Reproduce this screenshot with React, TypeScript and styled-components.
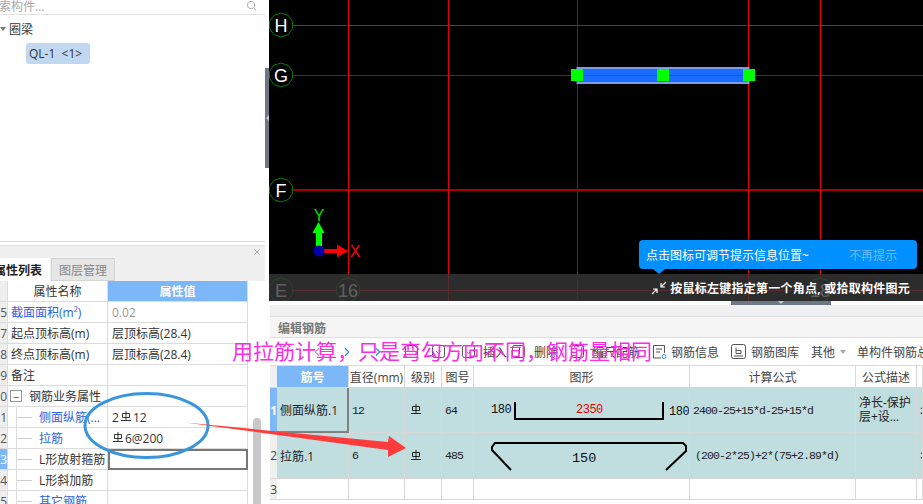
import React from 'react';
import styled, { createGlobalStyle } from 'styled-components';
import { Search, ChevronLeft, ChevronRight, X as CloseIcon } from 'lucide-react';

const GlobalStyle = createGlobalStyle`
  html, body {
    margin: 0;
    padding: 0;
    background: #fff;
    font-family: "Open Sans", "Noto Sans CJK SC", sans-serif;
  }
  * { box-sizing: border-box; }
`;

const Page = styled.div`
  position: relative;
  display: flex;
  width: 923px;
  height: 504px;
  overflow: hidden;
  background: #fff;
  color: #333;
  font-size: 12px;
`;

/* ---------- left column ---------- */

const LeftColumn = styled.div`
  display: flex;
  flex-direction: column;
  width: 265px;
  flex-shrink: 0;
`;

const TreePanel = styled.div`
  height: 242px;
  border-bottom: 1px solid #ddd;
  flex-shrink: 0;
`;

const SearchBar = styled.div`
  display: flex;
  align-items: center;
  justify-content: space-between;
  height: 15px;
  padding-right: 8px;
  border-bottom: 1px solid #e2e2e2;
  overflow: hidden;
  color: #a8a8a8;
  svg { color: #aaa; margin-top: -3px; }
`;

const SearchText = styled.span`
  margin-left: -13px;
  margin-top: -2px;
  line-height: 15px;
`;

const TreeRow = styled.div`
  display: flex;
  align-items: center;
  gap: 3px;
  height: 28px;
`;

const Caret = styled.span`
  width: 0;
  height: 0;
  border-left: 3px solid transparent;
  border-right: 3px solid transparent;
  border-top: 4px solid #777;
`;

const TreeChip = styled.div`
  width: 64px;
  height: 21px;
  margin-left: 26px;
  padding-left: 3px;
  background: #c0d8f1;
  border-radius: 3px;
  line-height: 21px;
  white-space: pre;
`;

const PropPanel = styled.div`
  display: flex;
  flex-direction: column;
  flex: 1;
  min-height: 0;
  margin-top: 3px;
  background: #f0f0f0;
  border-top: 1px solid #ddd;
`;

const PanelHeader = styled.div`
  display: flex;
  justify-content: flex-end;
  align-items: center;
  height: 12px;
  padding-right: 3px;
  svg { color: #999; }
`;

const Tabs = styled.div`
  display: flex;
  height: 23px;
  gap: 1px;
`;

const Tab = styled.div<{ $active?: boolean }>`
  display: flex;
  align-items: center;
  justify-content: ${p => (p.$active ? 'flex-end' : 'center')};
  width: ${p => (p.$active ? '50px' : '64px')};
  padding-right: ${p => (p.$active ? '8px' : '0')};
  background: ${p => (p.$active ? '#fff' : '#e6e6e6')};
  color: ${p => (p.$active ? '#222' : '#888')};
  border: ${p => (p.$active ? 'none' : '1px solid #d4d4d4')};
  font-weight: ${p => (p.$active ? 700 : 400)};
  white-space: nowrap;
  overflow: hidden;
`;

const PropBody = styled.div`
  display: flex;
  flex: 1;
  min-height: 0;
  background: #fff;
  overflow: hidden;
`;

const PropTable = styled.div`
  width: 248px;
  flex-shrink: 0;
`;

const PropRow = styled.div`
  display: grid;
  grid-template-columns: 8px 100px 140px;
  height: 21px;
`;

const RowNo = styled.div<{ $active?: boolean }>`
  display: flex;
  justify-content: flex-end;
  align-items: center;
  overflow: hidden;
  background: ${p => (p.$active ? '#7db7f7' : '#eee')};
  color: ${p => (p.$active ? '#fff' : '#555')};
  border-bottom: 1px solid #dcdcdc;
  border-right: 1px solid #dcdcdc;
`;

const NameCell = styled.div<{ $blue?: boolean; $indent?: number; $head?: boolean }>`
  display: flex;
  align-items: center;
  justify-content: ${p => (p.$head ? 'center' : 'flex-start')};
  padding-left: ${p => p.$indent ?? 3}px;
  position: relative;
  color: ${p => (p.$blue ? '#2b62e3' : '#333')};
  border-right: 1px solid #dcdcdc;
  border-bottom: 1px solid #dcdcdc;
  white-space: nowrap;
  overflow: hidden;
`;

const TreeStub = styled.span`
  position: absolute;
  left: 8px;
  top: 10px;
  width: 16px;
  border-top: 1px solid #ccc;
  &::before {
    content: '';
    position: absolute;
    left: 0;
    top: -11px;
    height: 21px;
    border-left: 1px solid #ddd;
  }
`;

const ExpandBox = styled.span`
  display: inline-flex;
  align-items: center;
  justify-content: center;
  width: 12px;
  height: 12px;
  margin-right: 7px;
  border: 1px solid #999;
  border-radius: 1px;
  font-size: 11px;
  line-height: 1;
`;

const ValueCell = styled.div<{ $head?: boolean; $selected?: boolean; $muted?: boolean }>`
  display: flex;
  align-items: center;
  justify-content: ${p => (p.$head ? 'center' : 'flex-start')};
  gap: 1px;
  padding-left: ${p => (p.$head ? 0 : 4)}px;
  background: ${p => (p.$head ? '#7cb7f8' : '#fff')};
  color: ${p => (p.$head ? '#fff' : p.$muted ? '#999' : '#333')};
  font-weight: ${p => (p.$head ? 700 : 400)};
  border-right: ${p => (p.$selected ? '2px solid #777' : '1px solid #dcdcdc')};
  border-bottom: ${p => (p.$selected ? '2px solid #777' : '1px solid #dcdcdc')};
  border-top: ${p => (p.$selected ? '2px solid #777' : 'none')};
  border-left: ${p => (p.$selected ? '2px solid #777' : 'none')};
  white-space: nowrap;
`;

const ScrollTrack = styled.div`
  flex: 1;
  padding: 137px 4px 0 5px;
`;

const ScrollThumb = styled.div`
  height: 100px;
  background: #c8c8c8;
  border-radius: 4px;
`;

/* ---------- right column ---------- */

const RightColumn = styled.div`
  display: flex;
  flex-direction: column;
  flex: 1;
  min-width: 0;
`;

const CanvasRow = styled.div`
  display: flex;
  height: 301px;
  flex-shrink: 0;
`;

const Gutter = styled.div`
  width: 4px;
  flex-shrink: 0;
  padding-top: 68px;
`;

const GutterHandle = styled.div`
  display: flex;
  align-items: center;
  justify-content: center;
  height: 100px;
  background: #6d7885;
  &::after {
    content: '';
    border-top: 3px solid transparent;
    border-bottom: 3px solid transparent;
    border-right: 3px solid #c8c8c8;
  }
`;

const Canvas = styled.div`
  position: relative;
  flex: 1;
  background: #000;
  overflow: hidden;
  svg { display: block; }
`;

const HintBar = styled.div`
  position: absolute;
  left: 0;
  right: 0;
  bottom: 0;
  height: 27px;
  display: flex;
  align-items: center;
  justify-content: flex-end;
  gap: 3px;
  padding-right: 13px;
  background: rgba(55, 55, 55, 0.8);
  color: #fff;
  font-weight: 700;
  letter-spacing: 0.25px;
  white-space: nowrap;
`;

const Tip = styled.div`
  position: absolute;
  left: 370px;
  top: 240px;
  width: 278px;
  height: 29px;
  display: flex;
  align-items: center;
  justify-content: space-between;
  padding: 0 20px 0 7px;
  background: #0090ff;
  border-radius: 4px;
  color: #fff;
  &::after {
    content: '';
    position: absolute;
    left: 14px;
    top: 29px;
    border-left: 6px solid transparent;
    border-right: 6px solid transparent;
    border-top: 5px solid #0090ff;
  }
`;

const TipDismiss = styled.span`
  color: #6cbcff;
`;

const Resizer = styled.div`
  display: flex;
  height: 4px;
  padding-left: 466px;
  flex-shrink: 0;
`;

const ResizerHandle = styled.div`
  display: flex;
  justify-content: center;
  width: 100px;
  background: #6d7885;
  &::after {
    content: '';
    border-left: 3px solid transparent;
    border-right: 3px solid transparent;
    border-top: 3px solid #c8c8c8;
  }
`;

const Editor = styled.div`
  display: flex;
  flex-direction: column;
  flex: 1;
  min-height: 0;
  margin-left: 5px;
  background: #f0f0f0;
  padding-top: 11px;
`;

const EditorTitle = styled.div`
  height: 22px;
  padding: 2px 0 0 8px;
  background: #f5f5f5;
  border-top: 1px solid #ddd;
  border-bottom: 1px solid #ddd;
  color: #777;
  font-weight: 700;
`;

const Toolbar = styled.div`
  display: flex;
  align-items: center;
  height: 28px;
  background: #fff;
  border-bottom: 1px solid #ddd;
  color: #444;
  white-space: nowrap;
  overflow: hidden;
  flex-shrink: 0;
`;

const ToolButton = styled.div<{ $ml: number; $gap?: number }>`
  display: flex;
  align-items: center;
  gap: ${p => p.$gap ?? 5}px;
  margin-left: ${p => p.$ml}px;
  flex-shrink: 0;
`;

const DropCaret = styled.span`
  border-left: 3px solid transparent;
  border-right: 3px solid transparent;
  border-top: 4px solid #aaa;
`;

const EditorTable = styled.div`
  background: #fff;
  flex: 1;
`;

const EditRow = styled.div<{ $h: number }>`
  display: grid;
  grid-template-columns: 7px 72px 56px 37px 32px 216px 166px 61px 6px;
  height: ${p => p.$h}px;
`;

const EditNo = styled.div<{ $active?: boolean }>`
  display: flex;
  align-items: center;
  justify-content: flex-end;
  overflow: hidden;
  background: ${p => (p.$active ? '#7db7f7' : '#f0f0f0')};
  color: ${p => (p.$active ? '#fff' : '#444')};
  font-weight: ${p => (p.$active ? 700 : 400)};
  border-bottom: 1px solid #d8d8d8;
`;

const EditHead = styled.div<{ $blue?: boolean }>`
  display: flex;
  align-items: center;
  justify-content: center;
  background: ${p => (p.$blue ? '#7cb7f8' : '#fff')};
  color: ${p => (p.$blue ? '#fff' : '#444')};
  font-weight: ${p => (p.$blue ? 700 : 400)};
  border-right: 1px solid #d8d8d8;
  border-bottom: 1px solid #d8d8d8;
  white-space: nowrap;
  overflow: hidden;
`;

const EditCell = styled.div<{ $fill?: boolean; $selected?: boolean; $mono?: boolean; $pad?: number }>`
  display: flex;
  align-items: center;
  padding-left: ${p => p.$pad ?? 3}px;
  background: ${p => (p.$fill ? '#c0dde0' : '#fff')};
  color: #222;
  font-family: ${p => (p.$mono ? '"Liberation Mono", monospace' : 'inherit')};
  font-size: ${p => (p.$mono ? '11.5px' : '12px')};
  letter-spacing: ${p => (p.$mono ? '-0.9px' : '0')};
  border-right: ${p => (p.$selected ? '2px solid #808080' : '1px solid #d8d8d8')};
  border-bottom: ${p => (p.$selected ? '2px solid #808080' : '1px solid #d8d8d8')};
  overflow: hidden;
  white-space: nowrap;
  svg { flex-shrink: 0; }
`;

const WrapText = styled.span`
  white-space: normal;
  line-height: 14px;
`;

/* ---------- things lying over the page ---------- */

const PinkNote = styled.div`
  position: absolute;
  left: 232px;
  top: 336px;
  color: #f92de6;
  font-family: "Noto Sans CJK SC", sans-serif;
  font-size: 21px;
  line-height: 28px;
  white-space: nowrap;
  pointer-events: none;
`;

const Markup = styled.svg`
  position: absolute;
  left: 0;
  top: 0;
  pointer-events: none;
`;

const RebarMark = ({ color = '#222' }: { color?: string }) => (
  <svg width="12" height="12" viewBox="0 0 12 12" fill="none" stroke={color} strokeWidth="1">
    <path d="M2.5 2.500h7v4h-7zM6 0v9.500M1 9.500h10" />
  </svg>
);

const SmallBox = ({ accent, tick }: { accent?: string; tick?: string }) => (
  <svg width="15" height="15" viewBox="0 0 15 15" fill="none" stroke="#555">
    <rect x="1.5" y="1.5" width="12" height="12" rx="2" />
    {accent && <path d="M5 7l2.500 2.500L10 7" stroke={accent} />}
    {tick && <path d="M8.500 4v6" stroke={tick} />}
  </svg>
);

const InfoIcon = () => (
  <svg width="15" height="16" viewBox="0 0 15 16" fill="none" stroke="#555">
    <path d="M9 14H1.500V1.500h11V9" />
    <path d="M4 5h6M4 8h4" />
    <circle cx="12" cy="12.500" r="2" stroke="#2f8fef" />
  </svg>
);

const LibraryIcon = () => (
  <svg width="15" height="15" viewBox="0 0 15 15" fill="none" stroke="#555">
    <rect x="0.5" y="0.5" width="14" height="14" rx="2" />
    <path d="M5 3.500v6h5V6.500H5M3 12h9" />
  </svg>
);

const CornerIcon = () => (
  <svg width="16" height="14" viewBox="0 0 16 14" fill="none" stroke="#fff" strokeWidth="1.2">
    <path d="M15 1L10 6M10 2v4h4M1 13l5-5M2 8h4v4" />
  </svg>
);

const shapeFont = '"Liberation Mono", monospace';

const HookShape = () => (
  <svg width="215" height="44" viewBox="0 0 215 44">
    <text x="17" y="25" fontFamily={shapeFont} fontSize="12" letterSpacing="-0.5" fill="#111">180</text>
    <path d="M41 14v17h148V14" fill="none" stroke="#000" strokeWidth="2" />
    <text x="102" y="25" fontFamily={shapeFont} fontSize="12" letterSpacing="-0.5" fill="#e00000">2350</text>
    <text x="195" y="27" fontFamily={shapeFont} fontSize="12" letterSpacing="-0.5" fill="#111">180</text>
  </svg>
);

const TieShape = () => (
  <svg width="215" height="45" viewBox="0 0 215 45">
    <path d="M37 37L18 17v-3l3-4h188l3 3v5l-20 19" fill="none" stroke="#000" strokeWidth="2" />
    <text x="98" y="29" fontFamily={shapeFont} fontSize="13.5" fill="#111">150</text>
  </svg>
);

const axisV = [348.5, 448.5, 577.5, 748.5, 820.5];

const ringPoints = (cx: number, cy: number, r: number) =>
  Array.from({ length: 10 }, (_, i) => {
    const a = (Math.PI * 2 * i) / 10 + Math.PI / 10;
    return `${cx + r * Math.cos(a)},${cy + r * Math.sin(a)}`;
  }).join(' ');

const GridDrawing = () => (
  <svg width="654" height="301" viewBox="269 0 654 301">
    <line x1="269" x2="923" y1="25.5" y2="25.5" stroke="#e60000" />
    <line x1="269" x2="923" y1="75.5" y2="75.5" stroke="#b00000" />
    <line x1="269" x2="923" y1="190" y2="190" stroke="#a80000" strokeWidth="2" />
    <line x1="269" x2="923" y1="290.5" y2="290.5" stroke="#d00000" />
    {axisV.map((x, i) => (
      <line key={x} x1={x} x2={x} y1="0" y2="301" stroke={i === 2 ? '#b00000' : '#e60000'} />
    ))}

    {[
      { label: 'H', cx: 281, cy: 25 },
      { label: 'G', cx: 281, cy: 75 },
      { label: 'F', cx: 281, cy: 190 },
      { label: 'E', cx: 281, cy: 290 },
      { label: '16', cx: 348, cy: 290 },
      { label: '18', cx: 820, cy: 290 },
    ].map(a => (
      <g key={a.label}>
        <polygon points={ringPoints(a.cx, a.cy, 12)} fill="#000" stroke="#0a7a0a" />
        <text
          x={a.cx}
          y={a.cy + 7}
          textAnchor="middle"
          fill="#fff"
          fontFamily='"Liberation Sans", sans-serif'
          fontSize="18"
        >
          {a.label}
        </text>
      </g>
    ))}

    <rect x="577.5" y="68" width="171" height="15" fill="#1a6cff" stroke="#7d9ce8" strokeWidth="2" />
    <line x1="577" x2="749" y1="75.5" y2="75.5" stroke="#c81e3c" />
    <rect x="571" y="69" width="12" height="12" fill="#00ff00" />
    <rect x="657" y="69" width="12" height="12" fill="#00ff00" />
    <rect x="743" y="69" width="12" height="12" fill="#00ff00" />

    <path d="M316 251v-18h-3.500l6-11 6 11H322v18z" fill="#00ff00" />
    <path d="M319 249h18v-4.500l11 6.500-11 6.500V253h-18z" fill="#ff0000" />
    <circle cx="319" cy="251" r="5.500" fill="#0000aa" />
    <text x="319" y="221" textAnchor="middle" fill="#00e000" fontFamily='"Liberation Sans", sans-serif' fontSize="16">Y</text>
    <text x="355" y="257" textAnchor="middle" fill="#ff0000" fontFamily='"Liberation Sans", sans-serif' fontSize="16">X</text>
  </svg>
);

const propRows = [
  { no: '15', name: '截面面积(m²)', value: '0.02', blue: true, muted: true },
  { no: '17', name: '起点顶标高(m)', value: '层顶标高(28.4)' },
  { no: '18', name: '终点顶标高(m)', value: '层顶标高(28.4)' },
  { no: '19', name: '备注', value: '' },
];

const EDIT_HEADS = ['直径(mm)', '级别', '图号', '图形', '计算公式', '公式描述', ''];

export default function App() {
  return (
    <Page>
      <GlobalStyle />

      <LeftColumn>
        <TreePanel>
          <SearchBar>
            <SearchText>搜索构件...</SearchText>
            <Search size={11} />
          </SearchBar>
          <TreeRow>
            <Caret />
            <span>圈梁</span>
          </TreeRow>
          <TreeChip>QL-1  &lt;1&gt;</TreeChip>
        </TreePanel>

        <PropPanel>
          <PanelHeader>
            <CloseIcon size={10} />
          </PanelHeader>
          <Tabs>
            <Tab $active>属性列表</Tab>
            <Tab>图层管理</Tab>
          </Tabs>
          <PropBody>
            <PropTable>
              <PropRow>
                <RowNo />
                <NameCell $head $indent={0}>属性名称</NameCell>
                <ValueCell $head>属性值</ValueCell>
              </PropRow>
              {propRows.map(r => (
                <PropRow key={r.no}>
                  <RowNo>{r.no}</RowNo>
                  <NameCell $blue={r.blue}>{r.name}</NameCell>
                  <ValueCell $muted={r.muted}>{r.value}</ValueCell>
                </PropRow>
              ))}
              <PropRow>
                <RowNo>20</RowNo>
                <NameCell $indent={2}>
                  <ExpandBox>−</ExpandBox>
                  钢筋业务属性
                </NameCell>
                <ValueCell />
              </PropRow>
              <PropRow>
                <RowNo>21</RowNo>
                <NameCell $blue $indent={31}><TreeStub />侧面纵筋(...</NameCell>
                <ValueCell>2<RebarMark color="#333" />12</ValueCell>
              </PropRow>
              <PropRow>
                <RowNo>22</RowNo>
                <NameCell $blue $indent={31}><TreeStub />拉筋</NameCell>
                <ValueCell><RebarMark color="#333" />6@200</ValueCell>
              </PropRow>
              <PropRow>
                <RowNo $active>23</RowNo>
                <NameCell $indent={31}><TreeStub />L形放射箍筋</NameCell>
                <ValueCell $selected />
              </PropRow>
              <PropRow>
                <RowNo>24</RowNo>
                <NameCell $indent={31}><TreeStub />L形斜加筋</NameCell>
                <ValueCell />
              </PropRow>
              <PropRow>
                <RowNo>25</RowNo>
                <NameCell $blue $indent={31}><TreeStub />其它钢筋</NameCell>
                <ValueCell />
              </PropRow>
            </PropTable>
            <ScrollTrack>
              <ScrollThumb />
            </ScrollTrack>
          </PropBody>
        </PropPanel>
      </LeftColumn>

      <RightColumn>
        <CanvasRow>
          <Gutter>
            <GutterHandle />
          </Gutter>
          <Canvas>
            <GridDrawing />
            <HintBar>
              <CornerIcon />
              按鼠标左键指定第一个角点, 或拾取构件图元
            </HintBar>
            <Tip>
              <span>点击图标可调节提示信息位置~</span>
              <TipDismiss>不再提示</TipDismiss>
            </Tip>
          </Canvas>
        </CanvasRow>

        <Resizer>
          <ResizerHandle />
        </Resizer>

        <Editor>
          <EditorTitle>编辑钢筋</EditorTitle>
          <Toolbar>
            <ToolButton $ml={40}><ChevronLeft size={14} color="#aaa" /></ToolButton>
            <ToolButton $ml={16}><ChevronRight size={14} color="#3a8fe8" /></ToolButton>
            <ToolButton $ml={17}><ChevronRight size={14} color="#3a8fe8" /></ToolButton>
            <ToolButton $ml={19}><SmallBox /></ToolButton>
            <ToolButton $ml={12}><SmallBox accent="#2f8fef" /></ToolButton>
            <ToolButton $ml={15} $gap={7}><SmallBox accent="#2f8fef" />插入</ToolButton>
            <ToolButton $ml={4} $gap={8}><SmallBox tick="#e00000" />删除</ToolButton>
            <ToolButton $ml={12} $gap={7}><SmallBox />缩尺配筋</ToolButton>
            <ToolButton $ml={12} $gap={4}><InfoIcon />钢筋信息</ToolButton>
            <ToolButton $ml={12}><LibraryIcon />钢筋图库</ToolButton>
            <ToolButton $ml={12}>其他<DropCaret /></ToolButton>
            <ToolButton $ml={11}>单构件钢筋总重</ToolButton>
          </Toolbar>
          <EditorTable>
            <EditRow $h={22}>
              <EditNo />
              <EditHead $blue>筋号</EditHead>
              {EDIT_HEADS.map((h, i) => (
                <EditHead key={i}>{h}</EditHead>
              ))}
            </EditRow>
            <EditRow $h={45}>
              <EditNo $active>1</EditNo>
              <EditCell $fill $selected>侧面纵筋.1</EditCell>
              <EditCell $fill $mono>12</EditCell>
              <EditCell $fill $pad={5}><RebarMark /></EditCell>
              <EditCell $fill $mono>64</EditCell>
              <EditCell $fill $pad={0}><HookShape /></EditCell>
              <EditCell $fill $mono>2400-25+15*d-25+15*d</EditCell>
              <EditCell $fill><WrapText>净长-保护层+设…</WrapText></EditCell>
              <EditCell $fill $mono>2</EditCell>
            </EditRow>
            <EditRow $h={46}>
              <EditNo>2</EditNo>
              <EditCell $fill>拉筋.1</EditCell>
              <EditCell $fill $mono>6</EditCell>
              <EditCell $fill $pad={5}><RebarMark /></EditCell>
              <EditCell $fill $mono>485</EditCell>
              <EditCell $fill $pad={0}><TieShape /></EditCell>
              <EditCell $fill $mono $pad={5}>(200-2*25)+2*(75+2.89*d)</EditCell>
              <EditCell $fill />
              <EditCell $fill $mono>3</EditCell>
            </EditRow>
            <EditRow $h={21}>
              <EditNo>3</EditNo>
              <EditCell />
              <EditCell />
              <EditCell />
              <EditCell />
              <EditCell />
              <EditCell />
              <EditCell />
              <EditCell />
            </EditRow>
          </EditorTable>
        </Editor>
      </RightColumn>

      <PinkNote>用拉筋计算，只是弯勾方向不同，钢筋量相同</PinkNote>

      <Markup width="923" height="504" viewBox="0 0 923 504">
        <ellipse cx="146.5" cy="425.5" rx="61.5" ry="32" fill="none" stroke="#3a96dc" strokeWidth="3" />
        <path d="M185 422.500L388 442l1-6 17 12-18 9 0-7z" fill="#ff3b3b" />
      </Markup>
    </Page>
  );
}
